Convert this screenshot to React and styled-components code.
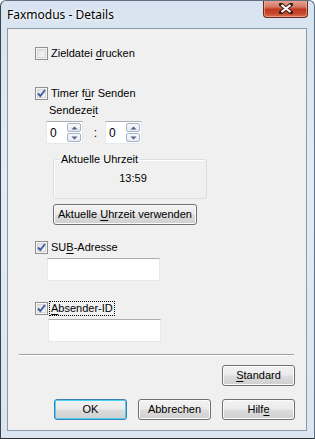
import React from "react";
import styled, { createGlobalStyle } from "styled-components";

const Global = createGlobalStyle`
  html, body { margin: 0; padding: 0; background: #fff; }
  body { font-family: "Liberation Sans", Arial, sans-serif; font-size: 11px; color: #000; }
`;

const Window = styled.div`
  width: 315px;
  height: 439px;
  box-sizing: border-box;
  border: 1px solid #5f6e80;
  border-bottom-color: #2a2f36;
  border-left-color: #3a424c;
  border-radius: 6px 6px 0 0;
  background: linear-gradient(180deg, #d7e3f0 0%, #e3ecf6 40%, #dae5f1 100%);
  display: flex;
  flex-direction: column;
  overflow: hidden;
`;

const TitleBar = styled.div`
  height: 27px;
  display: flex;
  align-items: flex-start;
  justify-content: space-between;
  padding-left: 6px;
`;

const Title = styled.div`
  font-family: "Noto Sans", "Open Sans", sans-serif;
  font-size: 12px;
  line-height: 16px;
  margin-top: 6px;
  color: #000;
  text-shadow: 0 0 6px #fff, 0 0 3px #fff;
`;

const CloseButton = styled.div`
  width: 45px;
  height: 18px;
  margin-right: 6px;
  margin-top: -1px;
  box-sizing: border-box;
  border: 1px solid #6b2a1f;
  border-top: none;
  border-radius: 0 0 4px 4px;
  background: linear-gradient(180deg, #e8a797 0%, #d47a66 40%, #c0391f 55%, #c9482d 80%, #d97256 100%);
  box-shadow: inset 0 0 0 1px rgba(255, 200, 180, 0.5);
  display: flex;
  align-items: center;
  justify-content: center;
`;

const Client = styled.div`
  flex: 1;
  margin: 0 7px 7px 6px;
  border: 1px solid #8c99a8;
  background: #f0f0f0;
  display: flex;
  flex-direction: column;
  padding-left: 27px;
`;

const CheckRow = styled.label`
  display: flex;
  align-items: center;
  height: 13px;
  margin-top: ${(p) => p.$top}px;
  gap: ${(p) => p.$gap ?? 3}px;
`;

const Box = styled.span`
  width: 13px;
  height: 13px;
  box-sizing: border-box;
  border: 1px solid #8e8f8f;
  background: linear-gradient(135deg, #d8d8d8 0%, #efefef 55%, #fbfbfb 100%);
  box-shadow: inset 0 0 0 1px #f7f7f7, inset 0 0 0 2px #d6d6d6;
  display: flex;
  align-items: center;
  justify-content: center;
  flex: none;
`;

const Text = styled.span`
  line-height: 13px;
  white-space: nowrap;
  ${(p) => p.$focus && "outline: 1px dotted #000; outline-offset: 0px; padding: 0 1px;"}
`;

const U = styled.span`
  text-decoration: underline;
  text-underline-offset: 2px;
`;

const Indented = styled.div`
  margin-left: ${(p) => p.$left}px;
  margin-top: ${(p) => p.$top}px;
`;

const SpinRow = styled.div`
  display: flex;
  align-items: center;
  margin-left: 11px;
  margin-top: 4px;
`;

const SpinField = styled.div`
  width: 37px;
  height: 23px;
  box-sizing: border-box;
  background: #fff;
  border: 1px solid #e3e9ef;
  border-top-color: #abadb3;
  display: flex;
  align-items: center;
  justify-content: space-between;
  padding: 1px 1px 1px 3px;
`;

const SpinValue = styled.span`
  font-size: 12px;
`;

const SpinButtons = styled.div`
  display: flex;
  flex-direction: column;
  gap: 1px;
`;

const SpinBtn = styled.div`
  width: 14px;
  height: 9px;
  box-sizing: border-box;
  border: 1px solid #a5b4c8;
  border-radius: 2px;
  background: linear-gradient(180deg, #f6f7f9 0%, #e6e9ee 100%);
  display: flex;
  align-items: center;
  justify-content: center;
`;

const Colon = styled.span`
  width: 22px;
  text-align: center;
  font-size: 12px;
  padding-left: 3px;
  box-sizing: border-box;
`;

const Group = styled.fieldset`
  margin: 9px 0 0 18px;
  width: 154px;
  height: 46px;
  box-sizing: border-box;
  padding: 0;
  border: 1px solid #d5dfe5;
  border-radius: 3px;
  box-shadow: inset 1px 1px 0 #fff;
`;

const Legend = styled.legend`
  margin-left: 5px;
  padding: 0 2px;
  line-height: 13px;
`;

const Clock = styled.div`
  text-align: center;
  margin-top: 6px;
  margin-left: 6px;
`;

const Button = styled.div`
  width: ${(p) => p.$w}px;
  height: 21px;
  box-sizing: border-box;
  border: 1px solid ${(p) => (p.$def ? "#3c7fb1" : "#707070")};
  border-radius: 3px;
  background: linear-gradient(180deg, #f2f2f2 0%, #ebebeb 48%, #dddddd 52%, #cfcfcf 100%);
  box-shadow: inset 0 0 0 1px ${(p) => (p.$def ? "#48d3f7" : "#fcfcfc")};
  display: flex;
  align-items: center;
  justify-content: center;
  line-height: 13px;
  white-space: nowrap;
`;

const UseNow = styled(Button)`
  margin: 5px 0 0 18px;
`;

const TextBox = styled.div`
  width: 113px;
  height: 23px;
  box-sizing: border-box;
  background: #fff;
  border: 1px solid #e3e9ef;
  border-top-color: #abadb3;
  margin-left: ${(p) => p.$left}px;
  margin-top: 4px;
`;

const Separator = styled.div`
  height: 0;
  border-top: 1px solid #a0a0a0;
  border-bottom: 1px solid #fff;
  margin: 12px 12px 0 -16px;
`;

const ButtonRow = styled.div`
  display: flex;
  justify-content: flex-end;
  gap: 11px;
  margin-top: ${(p) => p.$top}px;
  margin-right: 11px;
`;

function Check({ checked }) {
  return (
    <Box>
      {checked && (
        <svg width="9" height="9" viewBox="0 0 9 9">
          <path d="M1 4.5 L3.3 7 L8 1" fill="none" stroke="#3a5fa8" strokeWidth="1.9" />
        </svg>
      )}
    </Box>
  );
}

function Arrow({ up }) {
  return (
    <svg width="7" height="4" viewBox="0 0 7 4">
      <path d={up ? "M0.5 3.5 L3.5 0.5 L6.5 3.5 Z" : "M0.5 0.5 L3.5 3.5 L6.5 0.5 Z"} fill="#4c6088" />
    </svg>
  );
}

function Spinner() {
  return (
    <SpinField>
      <SpinValue>0</SpinValue>
      <SpinButtons>
        <SpinBtn>
          <Arrow up />
        </SpinBtn>
        <SpinBtn>
          <Arrow />
        </SpinBtn>
      </SpinButtons>
    </SpinField>
  );
}

export default function App() {
  return (
    <>
      <Global />
      <Window>
        <TitleBar>
          <Title>Faxmodus - Details</Title>
          <CloseButton>
            <svg width="14" height="11" viewBox="0 0 14 11">
              <path d="M2 1.5 L12 9.5 M12 1.5 L2 9.5" stroke="#3b1a14" strokeWidth="4" strokeLinecap="square" />
              <path d="M2.5 2 L11.5 9 M11.5 2 L2.5 9" stroke="#fff" strokeWidth="2.2" />
            </svg>
          </CloseButton>
        </TitleBar>
        <Client>
          <CheckRow $top={18}>
            <Check />
            <Text>
              Zieldatei <U>d</U>rucken
            </Text>
          </CheckRow>

          <CheckRow $top={27}>
            <Check checked />
            <Text>
              Timer f<U>ü</U>r Senden
            </Text>
          </CheckRow>
          <Indented $left={14} $top={4}>
            <Text>
              Sendeze<U>i</U>t
            </Text>
          </Indented>
          <SpinRow>
            <Spinner />
            <Colon>:</Colon>
            <Spinner />
          </SpinRow>

          <Group>
            <Legend>Aktuelle Uhrzeit</Legend>
            <Clock>13:59</Clock>
          </Group>
          <UseNow $w={144}>
            <span>
              Aktuelle <U>U</U>hrzeit verwenden
            </span>
          </UseNow>

          <CheckRow $top={16}>
            <Check checked />
            <Text>
              SU<U>B</U>-Adresse
            </Text>
          </CheckRow>
          <TextBox $left={12} />

          <CheckRow $top={21} $gap={2}>
            <Check checked />
            <Text $focus>
              <U>A</U>bsender-ID
            </Text>
          </CheckRow>
          <TextBox $left={13} />

          <Separator />
          <ButtonRow $top={9}>
            <Button $w={73}>
              <span>
                <U>S</U>tandard
              </span>
            </Button>
          </ButtonRow>
          <ButtonRow $top={13}>
            <Button $w={73} $def>
              OK
            </Button>
            <Button $w={73}>Abbrechen</Button>
            <Button $w={73}>
              <span>
                Hilf<U>e</U>
              </span>
            </Button>
          </ButtonRow>
        </Client>
      </Window>
    </>
  );
}
